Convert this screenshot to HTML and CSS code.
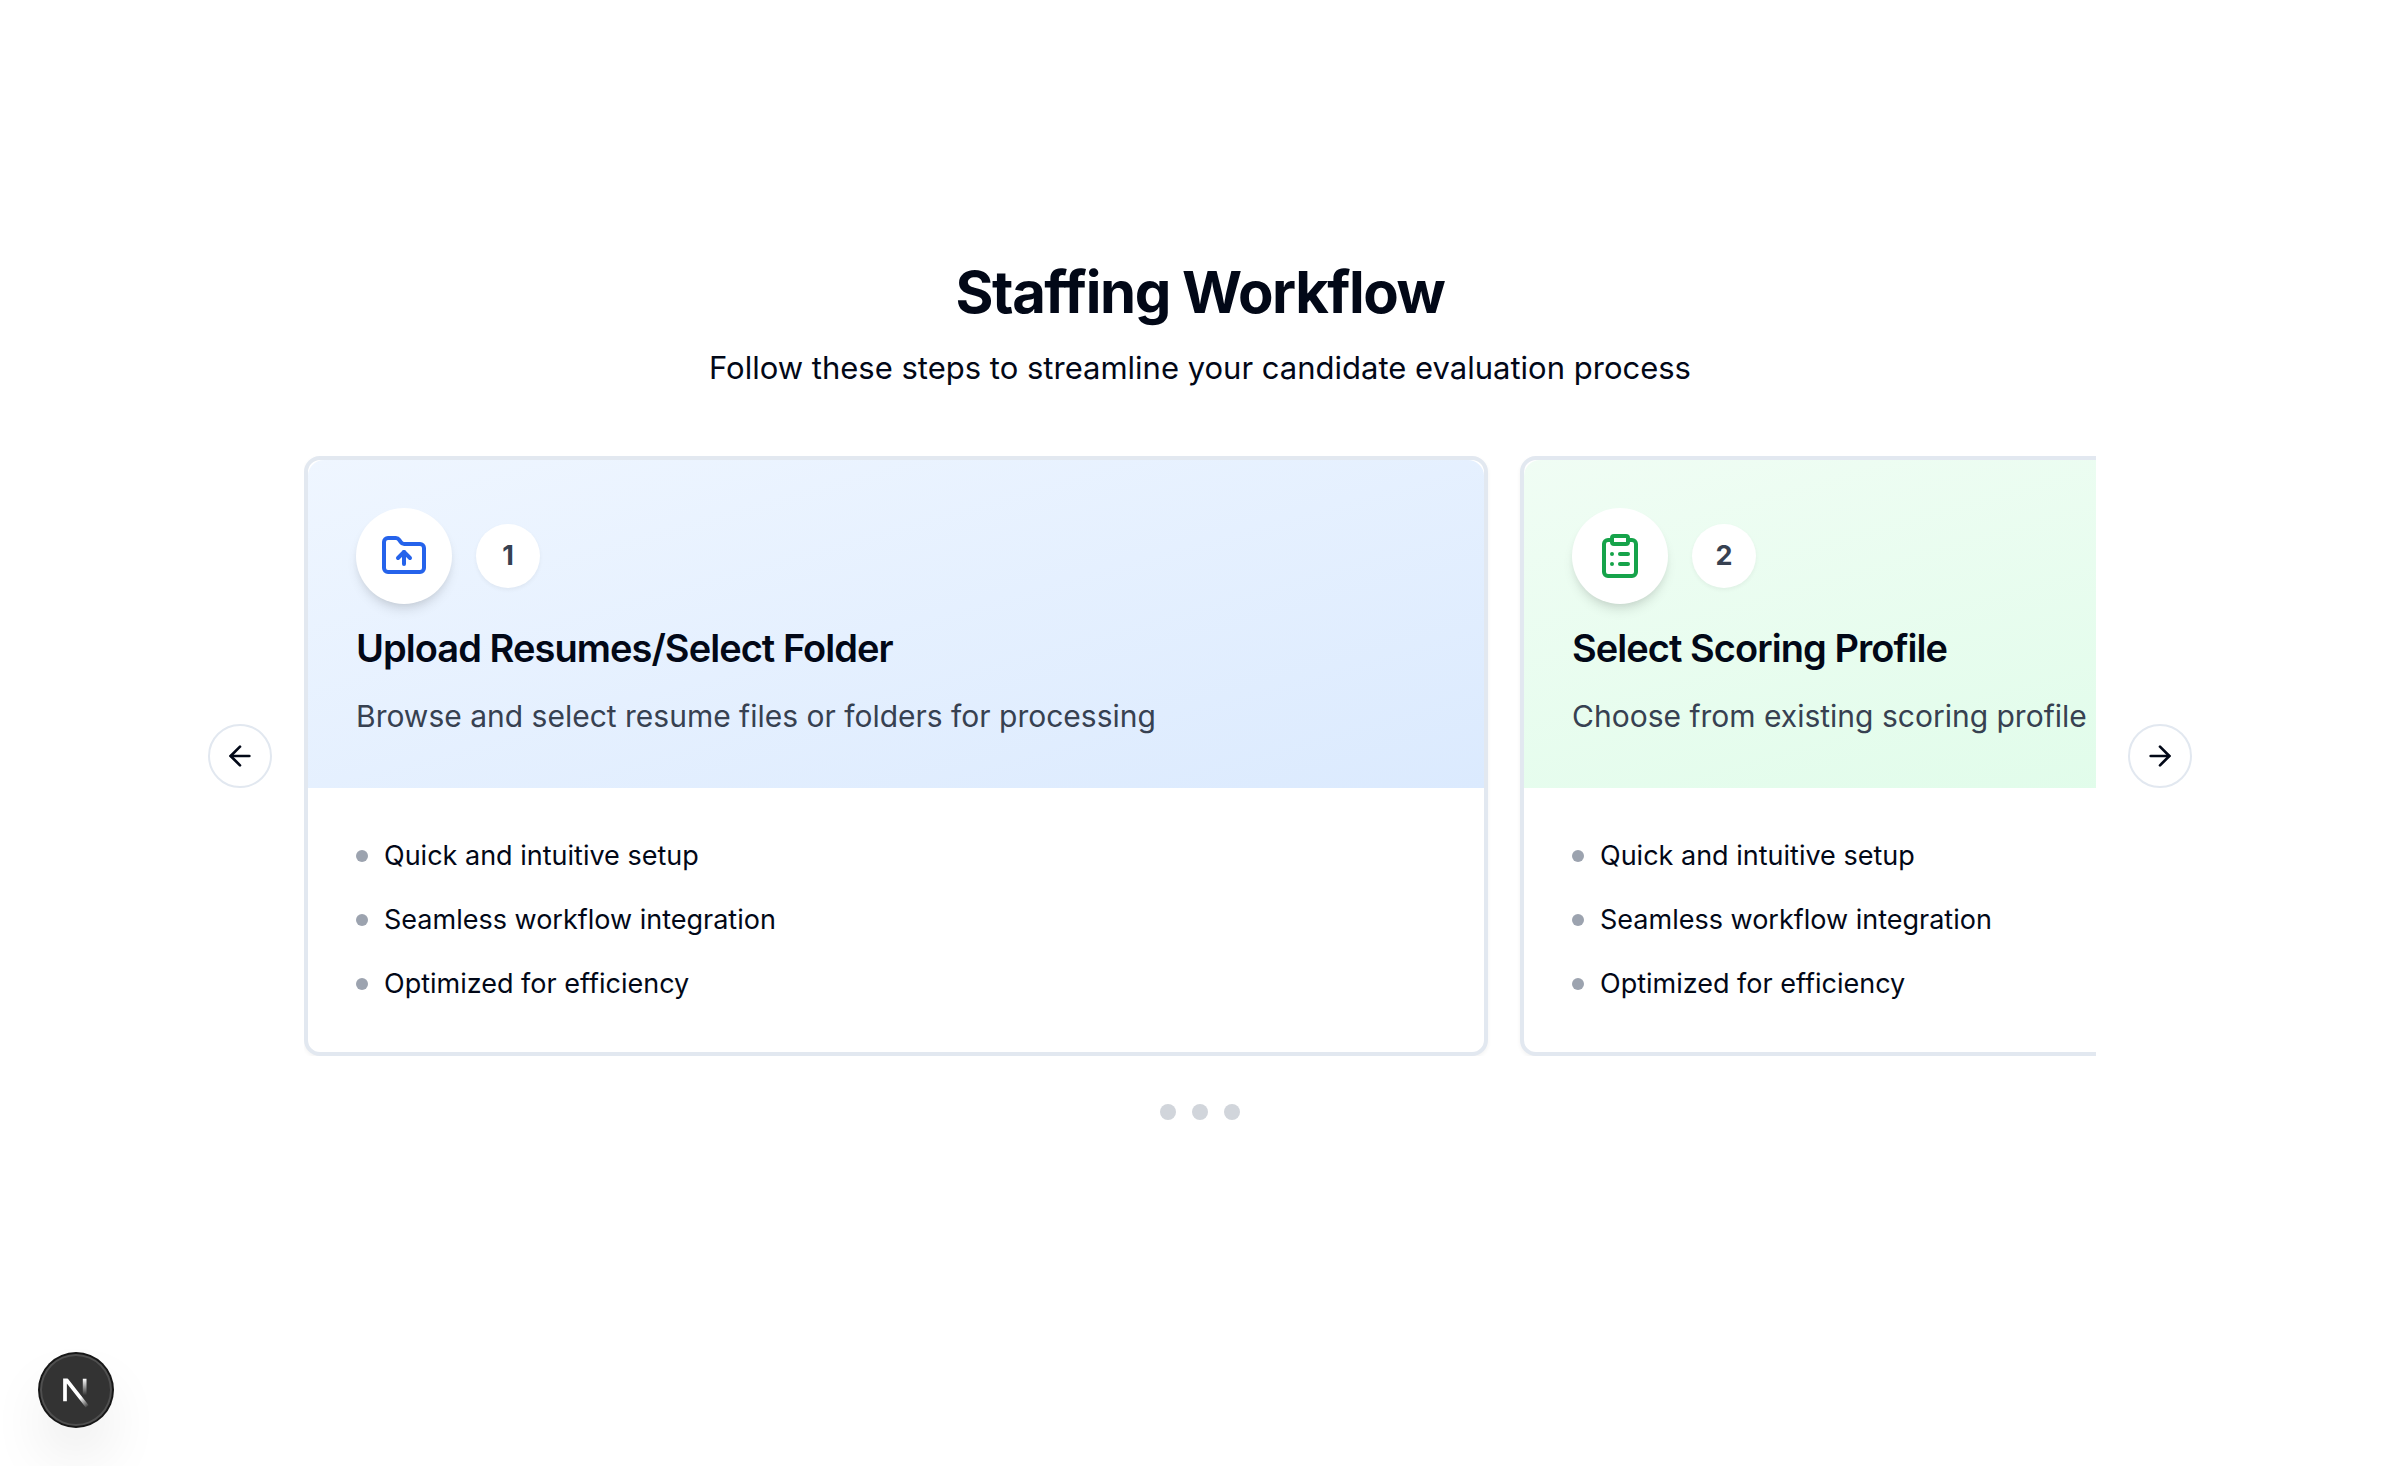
FILE: index.html
```html
<!DOCTYPE html>
<html lang="en">
<head>
<meta charset="utf-8">
<meta name="viewport" content="width=device-width, initial-scale=1">
<title>Staffing Workflow</title>
<link rel="stylesheet" href="styles.css">
</head>
<body>
<main class="workflow">
  <header class="intro">
    <h1 class="intro-title">Staffing Workflow</h1>
    <p class="intro-text">Follow these steps to streamline your candidate evaluation process</p>
  </header>

  <section class="carousel" aria-label="Workflow steps">
    <button class="arrow" type="button" aria-label="Previous step">
      <svg class="arrow-icon" viewBox="0 0 24 24"><path d="m12 19-7-7 7-7"/><path d="M19 12H5"/></svg>
    </button>
    <div class="viewport">
      <article class="card">
        <div class="card-head blue">
          <div class="badges">
            <span class="badge-icon">
              <svg class="step-icon" viewBox="0 0 24 24"><path d="M20 20a2 2 0 0 0 2-2V8a2 2 0 0 0-2-2h-7.9a2 2 0 0 1-1.69-.9L9.6 3.9A2 2 0 0 0 7.93 3H4a2 2 0 0 0-2 2v13a2 2 0 0 0 2 2Z"/><path d="M12 10v6"/><path d="m9 13 3-3 3 3"/></svg>
            </span>
            <span class="badge-number">1</span>
          </div>
          <h2 class="card-title">Upload Resumes/Select Folder</h2>
          <p class="card-text">Browse and select resume files or folders for processing</p>
        </div>
        <ul class="points">
          <li class="point">Quick and intuitive setup</li>
          <li class="point">Seamless workflow integration</li>
          <li class="point">Optimized for efficiency</li>
        </ul>
      </article>
      <article class="card">
        <div class="card-head green">
          <div class="badges">
            <span class="badge-icon">
              <svg class="step-icon" viewBox="0 0 24 24"><rect width="8" height="4" x="8" y="2" rx="1" ry="1"/><path d="M16 4h2a2 2 0 0 1 2 2v14a2 2 0 0 1-2 2H6a2 2 0 0 1-2-2V6a2 2 0 0 1 2-2h2"/><path d="M12 11h4"/><path d="M12 16h4"/><path d="M8 11h.01"/><path d="M8 16h.01"/></svg>
            </span>
            <span class="badge-number">2</span>
          </div>
          <h2 class="card-title">Select Scoring Profile</h2>
          <p class="card-text">Choose from existing scoring profile</p>
        </div>
        <ul class="points">
          <li class="point">Quick and intuitive setup</li>
          <li class="point">Seamless workflow integration</li>
          <li class="point">Optimized for efficiency</li>
        </ul>
      </article>
    </div>
    <button class="arrow" type="button" aria-label="Next step">
      <svg class="arrow-icon" viewBox="0 0 24 24"><path d="M5 12h14"/><path d="m12 5 7 7-7 7"/></svg>
    </button>
  </section>

  <nav class="dots" aria-label="Choose a step">
    <button class="dot" type="button" aria-label="Step 1"></button>
    <button class="dot" type="button" aria-label="Step 2"></button>
    <button class="dot" type="button" aria-label="Step 3"></button>
  </nav>
</main>

<button class="dev-button" type="button" aria-label="Open developer tools">
  <svg class="dev-logo" viewBox="0 0 40 40" fill="none">
    <defs>
      <linearGradient id="diagonal" gradientUnits="userSpaceOnUse" x1="9.96" y1="11.12" x2="13.9" y2="15.6">
        <stop stop-color="#fff"/><stop offset="1" stop-color="#fff" stop-opacity="0"/>
      </linearGradient>
      <linearGradient id="stem" gradientUnits="userSpaceOnUse" x1="12" y1="1.4" x2="12" y2="9.6">
        <stop stop-color="#fff"/><stop offset="1" stop-color="#fff" stop-opacity="0"/>
      </linearGradient>
      <clipPath id="flat-top"><path d="M0 1.2h16V17H0z"/></clipPath>
    </defs>
    <g transform="translate(12 13)" stroke-width="1.86" clip-path="url(#flat-top)">
      <path d="M13.6 15.2 2.5 1v11.6" stroke="url(#diagonal)"/>
      <path d="M11.4 1.2h1.86v8.6H11.4z" fill="url(#stem)" stroke="none"/>
    </g>
  </svg>
</button>
</body>
</html>
```

FILE: styles.css
```css
*,
*::before {
  box-sizing: border-box;
}

body {
  margin: 0;
  background: #fff;
  color: #020817;
  font-family: Inter, "Liberation Sans", sans-serif;
  font-size: 31px;
  line-height: 48px;
}

h1,
h2,
p,
ul {
  margin: 0;
  padding: 0;
}

button {
  padding: 0;
  border: 0;
  cursor: pointer;
}

.workflow {
  max-width: 2048px;
  margin: 0 auto;
  padding: 256px 32px 64px;
}

.intro {
  margin-bottom: 64px;
  text-align: center;
}

.intro-title {
  margin-bottom: 16px;
  font-size: 58px;
  font-weight: 700;
  line-height: 72px;
  letter-spacing: -0.025em;
}

.carousel {
  display: flex;
  align-items: center;
  gap: 32px;
}

.arrow {
  display: flex;
  flex: none;
  align-items: center;
  justify-content: center;
  width: 64px;
  height: 64px;
  border: 2px solid #e2e8f0;
  border-radius: 50%;
  background: #fff;
  color: #020817;
}

.arrow-icon,
.step-icon {
  fill: none;
  stroke: currentColor;
  stroke-width: 2;
  stroke-linecap: round;
  stroke-linejoin: round;
}

.arrow-icon {
  width: 32px;
  height: 32px;
}

.viewport {
  display: flex;
  flex: 1;
  gap: 32px;
  min-width: 0;
  overflow: hidden;
}

.card {
  flex: 0 0 calc((100% + 32px) * 2 / 3 - 32px);
  border: 4px solid #e2e8f0;
  border-radius: 16px;
  background: #fff;
  box-shadow: 0 2px 4px rgba(0, 0, 0, 0.05);
}

.card-head {
  padding: 48px;
  border-radius: 16px 16px 0 0;
}

.blue {
  background: linear-gradient(to bottom right, #eff6ff, #dbeafe);
}

.green {
  background: linear-gradient(to bottom right, #f0fdf4, #dcfce7);
}

.badges {
  display: flex;
  align-items: center;
  gap: 24px;
}

.badge-icon,
.badge-number {
  display: flex;
  align-items: center;
  justify-content: center;
  border-radius: 50%;
  background: #fff;
}

.badge-icon {
  width: 96px;
  height: 96px;
  box-shadow: 0 8px 12px -2px rgba(0, 0, 0, 0.1), 0 4px 8px -4px rgba(0, 0, 0, 0.1);
}

.badge-number {
  width: 64px;
  height: 64px;
  color: #374151;
  font-size: 27px;
  font-weight: 700;
  line-height: 40px;
  box-shadow: 0 2px 4px rgba(0, 0, 0, 0.05);
}

.step-icon {
  width: 48px;
  height: 48px;
}

.blue .step-icon {
  color: #2563eb;
}

.green .step-icon {
  color: #16a34a;
}

.card-title {
  margin: 24px 0;
  font-size: 38px;
  font-weight: 600;
  line-height: 40px;
  letter-spacing: -0.025em;
}

.card-text {
  color: #374151;
  font-size: 30px;
  white-space: nowrap;
}

.points {
  display: flex;
  flex-direction: column;
  gap: 24px;
  padding: 48px;
  list-style: none;
}

.point {
  display: flex;
  align-items: center;
  gap: 16px;
  font-size: 27px;
  line-height: 40px;
}

.point::before {
  content: "";
  width: 12px;
  height: 12px;
  border-radius: 50%;
  background: #9ca3af;
}

.dots {
  display: flex;
  justify-content: center;
  gap: 16px;
  margin-top: 48px;
}

.dot {
  width: 16px;
  height: 16px;
  border-radius: 50%;
  background: #d1d5db;
}

.dev-button {
  position: fixed;
  bottom: 40px;
  left: 40px;
  display: flex;
  align-items: center;
  justify-content: center;
  width: 72px;
  height: 72px;
  border-radius: 50%;
  background: #333;
  box-shadow: 0 0 0 2px #171717, inset 0 0 0 2px rgba(255, 255, 255, 0.14), 0 32px 64px -16px rgba(0, 0, 0, 0.24);
}

.dev-logo {
  flex: none;
  width: 80px;
  height: 80px;
}
```
